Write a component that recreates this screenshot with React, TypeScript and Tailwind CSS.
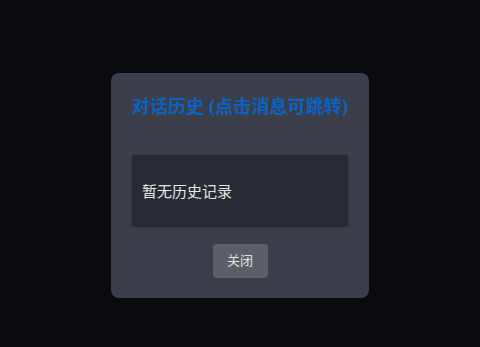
import React from "react";

export default function App() {
  return (
    <div
      className="w-[480px] h-[347px] bg-[#0a0b0e] flex justify-center pt-[73px]"
      style={{ fontFamily: '"Noto Sans", "Noto Sans CJK SC", sans-serif' }}
    >
      <div className="w-[258px] h-[225px] bg-[#3c3f4a] rounded-lg px-5 pt-5 pb-5 flex flex-col items-center">
        <div className="h-[26px] leading-[26px] text-[18px] font-bold text-[#0a63c4] whitespace-nowrap tracking-[0.1px]">
          对话历史 (点击消息可跳转)
        </div>
        <div className="mt-[35px] w-full h-[74px] bg-[#282b33] border border-[#343842] rounded-[4px] flex items-center px-[10px]">
          <span className="text-[15px] text-[#e6e6e6]">暂无历史记录</span>
        </div>
        <button className="mt-4 w-[55px] h-[34px] bg-[#5b6068] rounded-[4px] text-[13px] text-[#e2e2e2]">
          关闭
        </button>
      </div>
    </div>
  );
}
